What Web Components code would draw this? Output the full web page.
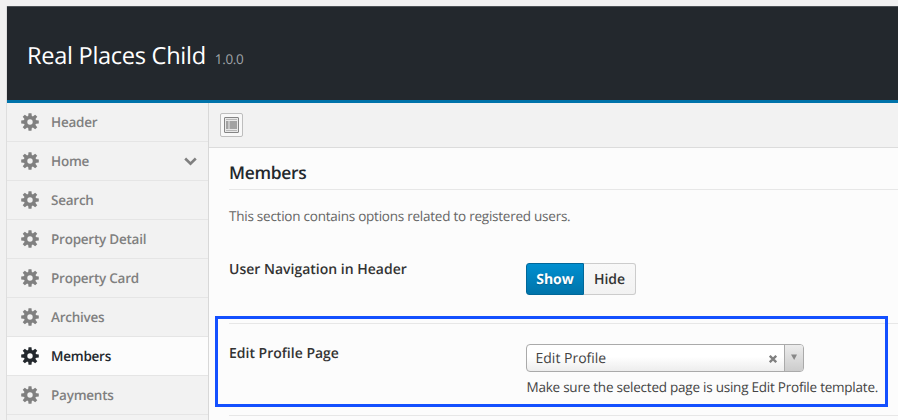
<!DOCTYPE html>
<html lang="en">
<head>
<meta charset="utf-8">
<title>Real Places Child</title>
<style>
html, body { margin: 0; height: 420px; overflow: hidden; background: #f1f1f1; }
body { font-family: "Open Sans", "Noto Sans", sans-serif; color: #333; text-rendering: geometricPrecision; }
</style>
</head>
<body>
<options-panel></options-panel>
<script>
const define = (name, html) => {
  const t = document.createElement('template');
  t.innerHTML = html;
  customElements.define(name, class extends HTMLElement {
    constructor() {
      super();
      this.attachShadow({ mode: 'open' }).append(t.content.cloneNode(true));
    }
  });
};

define('panel-header', `
<style>
:host { display: flex; align-items: baseline; box-sizing: border-box; height: 97px; padding: 32px 0 0 20px; background: #23282d; border-bottom: 3px solid #0073aa; border-top: 1px solid #4d5256; white-space: nowrap; }
.title { font-size: 23.6px; line-height: 32px; color: #fff; letter-spacing: -.3px; }
.version { font-size: 13.5px; letter-spacing: -.3px; color: #a0a5aa; margin-left: 9px; }
</style>
<span class="title"><slot></slot></span><span class="version"><slot name="version"></slot></span>`);

define('gear-icon', `
<style>:host { display: block; width: 18px; height: 18px; } svg { display: block; }</style>
<svg width="18" height="18" viewBox="-9 -9 18 18" fill="currentColor">
<path fill-rule="evenodd" d="M-6.2 0a6.2 6.2 0 1 0 12.4 0a6.2 6.2 0 1 0-12.4 0M-2.7 0a2.7 2.7 0 1 0 5.4 0a2.7 2.7 0 1 0-5.4 0"/>
<g><path id="tooth" d="M-1.9-5L-1.5-8.8H1.5L1.9-5Z"/>
<use href="#tooth" transform="rotate(45)"/><use href="#tooth" transform="rotate(90)"/><use href="#tooth" transform="rotate(135)"/><use href="#tooth" transform="rotate(180)"/><use href="#tooth" transform="rotate(225)"/><use href="#tooth" transform="rotate(270)"/><use href="#tooth" transform="rotate(315)"/></g>
</svg>`);

define('nav-item', `
<style>
:host { display: flex; align-items: center; box-sizing: border-box; height: 39px; padding: 0 11px 0 14px; border-bottom: 1px solid #e5e5e5; color: #808080; font-size: 13.5px; font-weight: 600; white-space: nowrap; }
:host([active]) { background: #fcfcfc; color: #23282d; }
.label { margin-left: 12px; flex: 1; line-height: 18px; letter-spacing: -.24px; }
svg { display: none; }
:host([expandable]) svg { display: block; }
</style>
<gear-icon></gear-icon><span class="label"><slot></slot></span>
<svg width="13" height="9" viewBox="0 0 13 9" fill="none" stroke="currentColor" stroke-width="2.6"><path d="M1.2 1.5L6.5 6.7L11.8 1.5"/></svg>`);

define('side-nav', `
<style>:host { display: block; box-sizing: border-box; width: 202px; border-right: 1px solid #d8d8d8; background: #f2f2f2; }</style>
<slot></slot>`);

define('layout-button', `
<style>:host { display: block; width: 23px; height: 24px; } svg { display: block; }</style>
<svg width="23" height="24" viewBox="0 0 23 24">
<rect x=".5" y=".5" width="22" height="23" rx="1.5" fill="#f8f8f8" stroke="#bebebe"/>
<rect x="4.5" y="4.5" width="14" height="15" rx=".5" fill="#e8e8e8" stroke="#858585"/>
<path d="M6 6.5H17M6 17.5H17" stroke="#b8b8b8"/>
<path d="M6 8H8.5V16H6ZM9.5 8H17V16H9.5Z" fill="#a2a2a2"/>
</svg>`);

define('tool-bar', `
<style>:host { display: flex; align-items: center; box-sizing: border-box; height: 45px; padding: 0 11px; background: #f2f2f2; border-bottom: 1px solid #dcdcdc; }</style>
<slot></slot>`);

define('section-intro', `
<style>
:host { display: block; padding-left: 20px; white-space: nowrap; }
h2 { margin: 0; box-sizing: border-box; height: 42px; padding-top: 13px; font-size: 17.4px; line-height: 24px; letter-spacing: -.3px; font-weight: 600; color: #23282d; border-bottom: 1px solid #e7e7e7; }
p { margin: 17px 0 0; font-size: 13.5px; letter-spacing: -.24px; line-height: 19px; color: #666; }
</style>
<h2><slot name="heading"></slot></h2><p><slot></slot></p>`);

define('setting-row', `
<style>
:host { display: flex; box-sizing: border-box; margin-left: 20px; border-bottom: 1px solid #e7e7e7; white-space: nowrap; }
.label { width: 297px; flex: none; font-size: 14px; line-height: 22px; font-weight: 600; color: #333; }
</style>
<span class="label"><slot name="label"></slot></span><div><slot></slot></div>`);

define('toggle-group', `
<style>
:host { display: flex; width: 110px; height: 32px; font-size: 14px; font-weight: 600; line-height: 32px; text-align: center; }
span { box-sizing: border-box; }
.on { width: 58px; color: #fff; font-weight: 700; background: linear-gradient(#008fd0, #0074aa); border: 1px solid #006799; border-radius: 3px 0 0 3px; text-shadow: 0 1px 1px #006090; }
.off { width: 52px; color: #333; background: linear-gradient(#f8f8f8, #f2f2f2); border: 1px solid #ccc; border-left: 0; border-radius: 0 3px 3px 0; }
</style>
<span class="on"><slot name="on"></slot></span><span class="off"><slot name="off"></slot></span>`);

define('select-box', `
<style>
:host { display: flex; box-sizing: border-box; width: 278px; height: 28px; border: 1px solid #aaa; border-radius: 4px; background: linear-gradient(#fff 45%, #ededed); font-size: 14px; line-height: 28px; color: #444; overflow: hidden; }
.value { flex: 1; padding-left: 8.5px; }
.clear { margin: 10px 7px 0 0; }
.arrow { width: 18px; border-left: 1px solid #aaa; background: linear-gradient(#ececec, #ccc); }
svg { display: block; } .arrow svg { margin: 9px 0 0 5px; }
</style>
<span class="value"><slot></slot></span>
<svg class="clear" width="8" height="8" viewBox="0 0 8 8" stroke="#808080" stroke-width="2.3"><path d="M.8.8L7.2 7.2M7.2.8L.8 7.2"/></svg>
<span class="arrow"><svg width="8" height="7" viewBox="0 0 8 7" fill="#888"><path d="M1 .5H7L4.2 6Z"/></svg></span>`);

define('help-text', `
<style>:host { display: block; padding-left: .5px; font-size: 13.5px; letter-spacing: -.235px; line-height: 19px; color: #444; }</style><slot></slot>`);

define('highlight-frame', `
<style>:host { position: absolute; left: 215px; top: 316px; box-sizing: border-box; width: 673px; height: 91px; border: 3px solid #1450ff; }</style>`);

define('options-panel', `
<style>
:host { display: block; box-sizing: border-box; width: 899px; height: 420px; overflow: hidden; padding: 6px 0 0 6px; border-right: 1px solid #fff; }
.frame { border-left: 1px solid #dedede; height: 414px; background: #fcfcfc; }
.body { display: grid; grid-template-columns: 202px 1fr; height: 317px; }
section-intro { height: 111px; }
.nav { height: 65px; }
.nav toggle-group { margin-top: 4px; }
.profile { height: 92px; padding-top: 19px; }
.profile select-box { margin-top: 1px; }
.profile help-text { margin-top: 6px; }
</style>
<div class="frame">
<panel-header>Real Places Child<span slot="version">1.0.0</span></panel-header>
<div class="body">
<side-nav>
<nav-item>Header</nav-item><nav-item expandable>Home</nav-item><nav-item>Search</nav-item><nav-item>Property Detail</nav-item><nav-item>Property Card</nav-item><nav-item>Archives</nav-item><nav-item active>Members</nav-item><nav-item>Payments</nav-item><nav-item></nav-item>
</side-nav>
<main>
<tool-bar><layout-button></layout-button></tool-bar>
<section-intro><span slot="heading">Members</span>This section contains options related to registered users.</section-intro>
<setting-row class="nav"><span slot="label">User Navigation in Header</span><toggle-group><span slot="on">Show</span><span slot="off">Hide</span></toggle-group></setting-row>
<setting-row class="profile"><span slot="label">Edit Profile Page</span><select-box>Edit Profile</select-box><help-text>Make sure the selected page is using Edit Profile template.</help-text></setting-row>
</main>
</div>
</div>
<highlight-frame></highlight-frame>`);
</script>
</body>
</html>
